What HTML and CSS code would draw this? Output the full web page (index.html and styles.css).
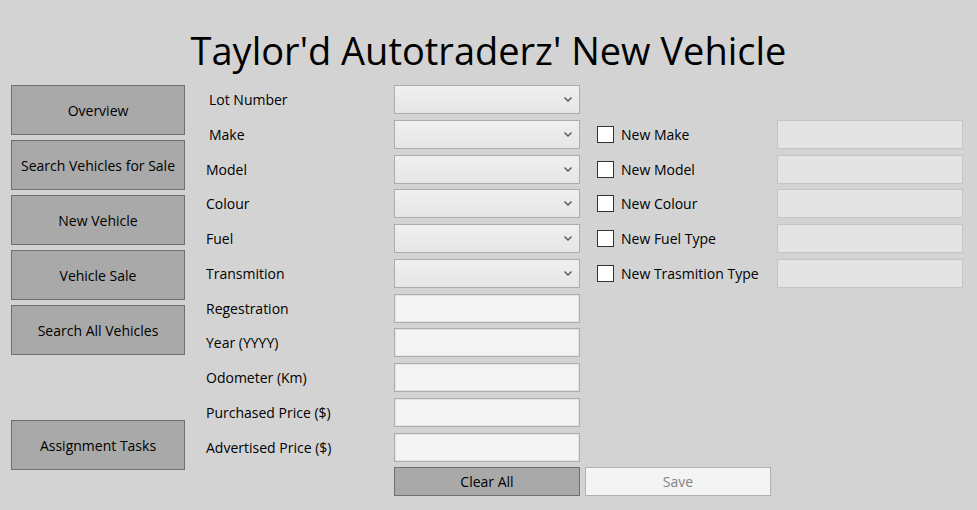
FILE: index.html
```html
<!DOCTYPE html>
<html>
<head>
<meta charset="utf-8">
<link rel="stylesheet" href="styles.css">
</head>
<body>
<h1 class="title">Taylor'd Autotraderz' New Vehicle</h1>
<div class="main">
  <nav class="sidebar">
    <button class="nav-btn">Overview</button>
    <button class="nav-btn">Search Vehicles for Sale</button>
    <button class="nav-btn">New Vehicle</button>
    <button class="nav-btn">Vehicle Sale</button>
    <button class="nav-btn">Search All Vehicles</button>
    <button class="nav-btn nav-btn-tasks">Assignment Tasks</button>
  </nav>
  <div class="form">
    <div class="lbl lbl-in">Lot Number</div>
    <div class="combo"><svg class="chev" width="8" height="5" viewBox="0 0 8 5"><path d="M0.5 0.5 L4 4 L7.5 0.5" fill="none" stroke="#555" stroke-width="1.4"/></svg></div>
    <div class="spacer"></div>

    <div class="lbl lbl-in">Make</div>
    <div class="combo"><svg class="chev" width="8" height="5" viewBox="0 0 8 5"><path d="M0.5 0.5 L4 4 L7.5 0.5" fill="none" stroke="#555" stroke-width="1.4"/></svg></div>
    <label class="chk"><span class="box"></span>New Make</label>
    <div class="dis-input"></div>

    <div class="lbl">Model</div>
    <div class="combo"><svg class="chev" width="8" height="5" viewBox="0 0 8 5"><path d="M0.5 0.5 L4 4 L7.5 0.5" fill="none" stroke="#555" stroke-width="1.4"/></svg></div>
    <label class="chk"><span class="box"></span>New Model</label>
    <div class="dis-input"></div>

    <div class="lbl">Colour</div>
    <div class="combo"><svg class="chev" width="8" height="5" viewBox="0 0 8 5"><path d="M0.5 0.5 L4 4 L7.5 0.5" fill="none" stroke="#555" stroke-width="1.4"/></svg></div>
    <label class="chk"><span class="box"></span>New Colour</label>
    <div class="dis-input"></div>

    <div class="lbl">Fuel</div>
    <div class="combo"><svg class="chev" width="8" height="5" viewBox="0 0 8 5"><path d="M0.5 0.5 L4 4 L7.5 0.5" fill="none" stroke="#555" stroke-width="1.4"/></svg></div>
    <label class="chk"><span class="box"></span>New Fuel Type</label>
    <div class="dis-input"></div>

    <div class="lbl">Transmition</div>
    <div class="combo"><svg class="chev" width="8" height="5" viewBox="0 0 8 5"><path d="M0.5 0.5 L4 4 L7.5 0.5" fill="none" stroke="#555" stroke-width="1.4"/></svg></div>
    <label class="chk"><span class="box"></span>New Trasmition Type</label>
    <div class="dis-input"></div>

    <div class="lbl">Regestration</div>
    <div class="txt"></div>
    <div class="spacer"></div>

    <div class="lbl">Year (YYYY)</div>
    <div class="txt"></div>
    <div class="spacer"></div>

    <div class="lbl">Odometer (Km)</div>
    <div class="txt"></div>
    <div class="spacer"></div>

    <div class="lbl">Purchased Price ($)</div>
    <div class="txt"></div>
    <div class="spacer"></div>

    <div class="lbl">Advertised Price ($)</div>
    <div class="txt"></div>
    <div class="spacer"></div>

    <div class="cell"></div>
    <button class="btn-clear">Clear All</button>
    <div class="cell"><button class="btn-save">Save</button></div>
  </div>
</div>
</body>
</html>
```
FILE: styles.css
```css
* { box-sizing: border-box; }
html, body {
  margin: 0;
  background: #d3d3d3;
  font-family: "Open Sans", "Noto Sans", sans-serif;
  color: #000;
  width: 977px;
  height: 510px;
  overflow: hidden;
}
.title {
  margin: 0;
  padding-top: 24px;
  height: 85px;
  text-align: center;
  font-weight: 400;
  font-size: 38px;
  line-height: 52px;
}
.main {
  display: flex;
  padding-left: 11px;
}
.sidebar {
  display: flex;
  flex-direction: column;
  gap: 5px;
  width: 174px;
}
.nav-btn {
  height: 50px;
  width: 174px;
  background: #a9a9a9;
  border: 1px solid #707070;
  font-family: inherit;
  font-size: 14px;
  color: #000;
  padding: 0;
}
.nav-btn-tasks { margin-top: 60px; }
.form {
  margin-left: 21px;
  display: grid;
  grid-template-columns: 188px 186px 197px 186px;
  grid-auto-rows: 29px;
  row-gap: 5.75px;
  font-size: 14px;
}
.lbl {
  display: flex;
  align-items: center;
}
.lbl-in { padding-left: 3px; }
.combo {
  position: relative;
  border: 1px solid #acacac;
  background: linear-gradient(#f0f0f0, #e5e5e5);
}
.chev {
  position: absolute;
  right: 7px;
  top: 11px;
}
.spacer { grid-column: span 2; }
.chk {
  display: flex;
  align-items: center;
  padding-left: 17px;
}
.box {
  width: 17px;
  height: 17px;
  background: #fff;
  border: 1px solid #333;
  margin-right: 7px;
}
.dis-input {
  border: 1px solid #c4c4c4;
  background: #e4e4e4;
}
.txt {
  border: 1px solid #abadb3;
  background: #f4f4f4;
  box-shadow: inset 0 0 0 1px #e3e3e8;
}
.btn-clear {
  background: #a9a9a9;
  border: 1px solid #707070;
  font-family: inherit;
  font-size: 14px;
  color: #000;
  padding: 0;
}
.cell { display: flex; }
.btn-save {
  width: 186px;
  margin-left: 5px;
  background: #f4f4f4;
  border: 1px solid #adb2b5;
  font-family: inherit;
  font-size: 14px;
  color: #838383;
  padding: 0;
}
```
